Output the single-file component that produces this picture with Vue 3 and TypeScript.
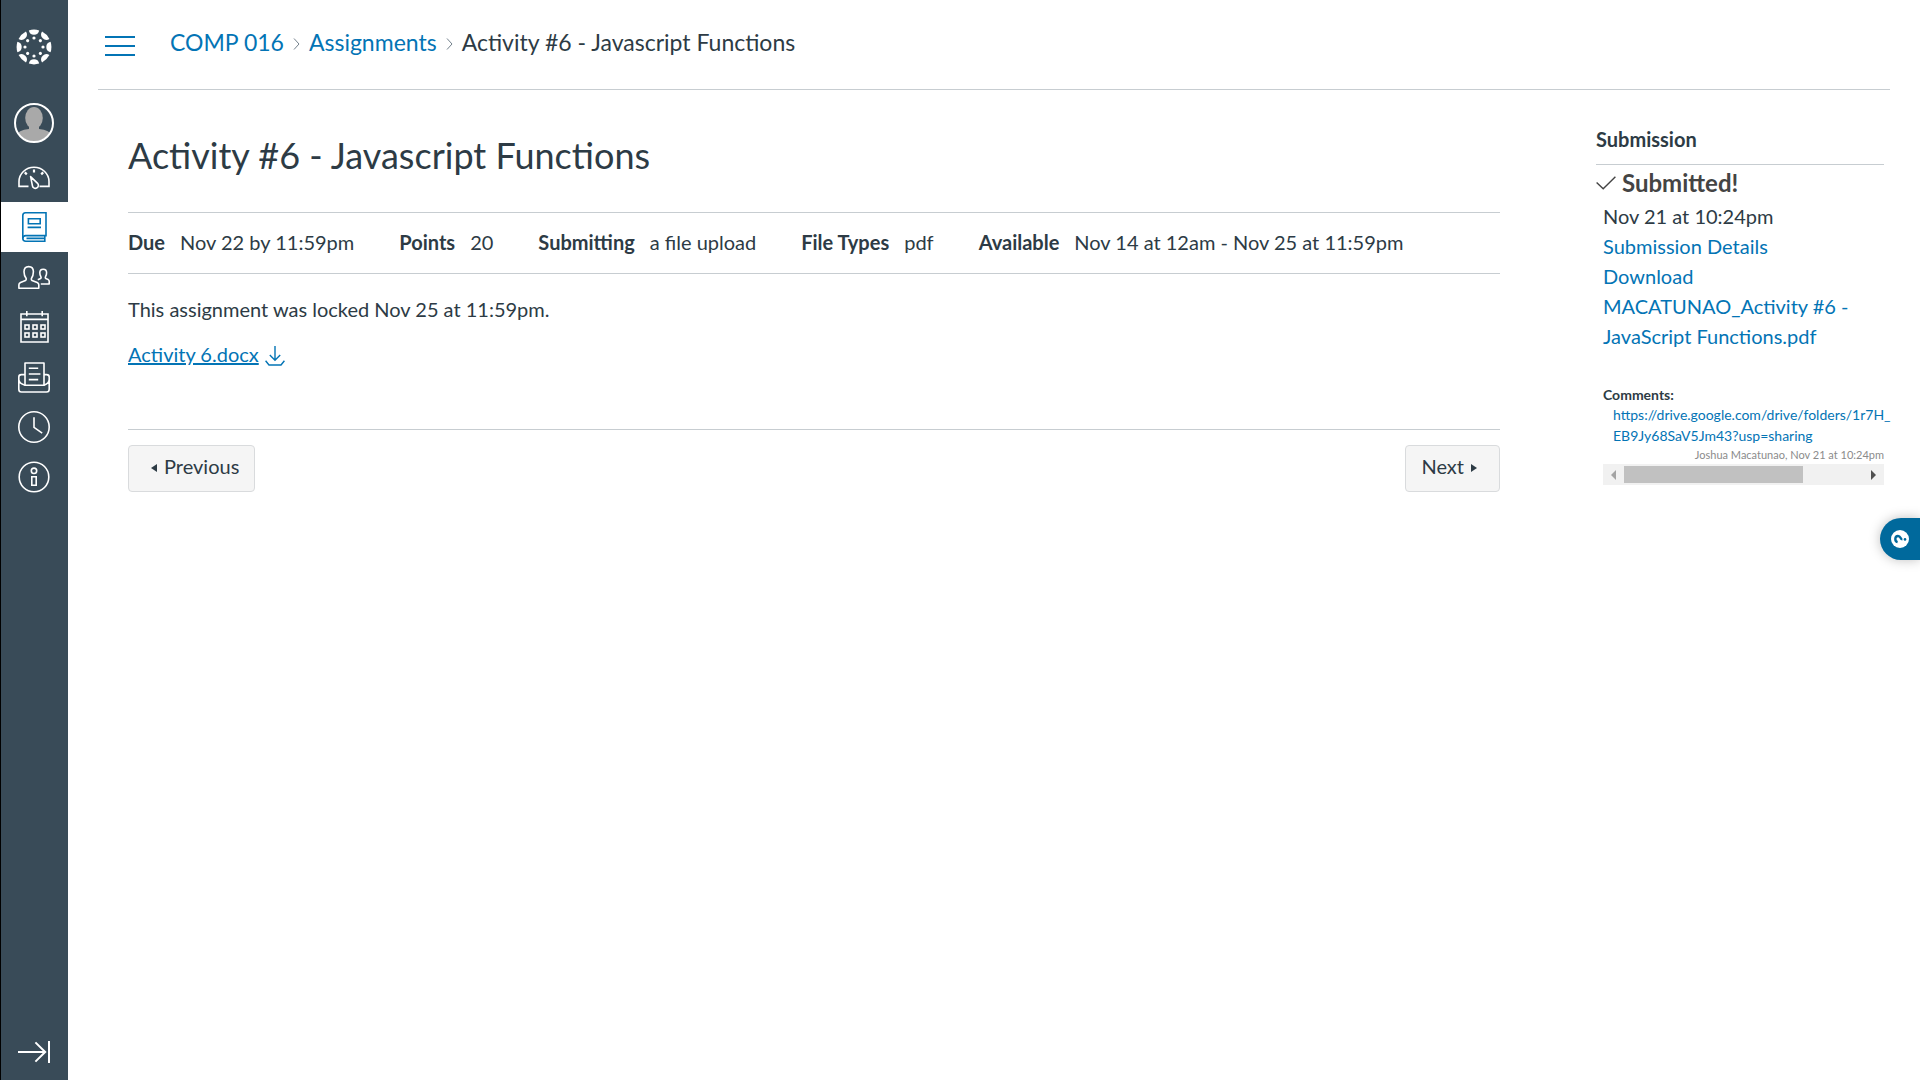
<script setup lang="ts">
interface NavItem {
  id: string
  label: string
  active?: boolean
}

interface Detail {
  label: string
  value: string
}

const navItems: NavItem[] = [
  { id: 'dashboard', label: 'Dashboard' },
  { id: 'courses', label: 'Courses', active: true },
  { id: 'groups', label: 'Groups' },
  { id: 'calendar', label: 'Calendar' },
  { id: 'inbox', label: 'Inbox' },
  { id: 'history', label: 'History' },
  { id: 'help', label: 'Help' },
]

const details: Detail[] = [
  { label: 'Due', value: 'Nov 22 by 11:59pm' },
  { label: 'Points', value: '20' },
  { label: 'Submitting', value: 'a file upload' },
  { label: 'File Types', value: 'pdf' },
  { label: 'Available', value: 'Nov 14 at 12am - Nov 25 at 11:59pm' },
]

const logoAngles: number[] = [0, 45, 90, 135, 180, 225, 270, 315]
const calendarCells: number[][] = [
  [6, 14], [14, 14], [22, 14],
  [6, 22], [14, 22], [22, 22],
]
</script>

<template>
  <div class="app">
    <nav class="global-nav" aria-label="Global navigation">
      <a class="logo" href="#" aria-label="Home">
        <svg viewBox="-18 -18 36 36" width="36" height="36" fill="#fff">
          <g v-for="a in logoAngles" :key="a" :transform="`rotate(${a})`">
            <path d="M-5.2 -16.6A17.4 17.4 0 0 1 5.2 -16.6A5.3 5.3 0 0 1 -5.2 -16.6Z" />
            <circle cx="0" cy="-9" r="1.6" />
          </g>
        </svg>
      </a>
      <a class="account" href="#" aria-label="Account">
        <svg viewBox="0 0 40 40" width="40" height="40">
          <defs>
            <clipPath id="avatar-clip"><circle cx="20" cy="20" r="18.5" /></clipPath>
          </defs>
          <g clip-path="url(#avatar-clip)" fill="#a9a9a9">
            <ellipse cx="20" cy="15" rx="8.8" ry="11" />
            <path d="M15 23H25V26Q36 27 38 33V40H2V33Q4 27 15 26Z" />
          </g>
          <circle cx="20" cy="20" r="19" fill="none" stroke="#fff" stroke-width="2" />
        </svg>
      </a>
      <a
        v-for="item in navItems"
        :key="item.id"
        href="#"
        class="nav-item"
        :class="{ active: item.active }"
        :aria-label="item.label"
      >
        <svg
          viewBox="0 0 32 32"
          width="32"
          height="32"
          fill="none"
          stroke="currentColor"
          stroke-width="1.6"
        >
          <g v-if="item.id === 'dashboard'">
            <path d="M10.5 25.4H1V20.5A15 14.2 0 0 1 31 20.5V25.4H21.5" />
            <path d="M12.6 15.6L19.6 22.3A3 3 0 1 1 14.4 24.6Z" stroke-linejoin="round" />
            <path d="M16 8.6V11.4M6.8 11.4L8.8 13.4M25.2 11.4L23.2 13.4" stroke-width="2.2" />
          </g>
          <g v-else-if="item.id === 'courses'">
            <path d="M28 1.8H7.5Q4.8 1.8 4.8 4.5V27.2Q4.8 30.2 7.8 30.2H26.5" />
            <path d="M28 1V24.6H7.8Q4.8 24.6 4.8 27.4M26.8 24.6V31M8.5 27.4H26" />
            <path d="M10.4 7.8H22.2V12.8H10.4ZM9.6 16.4H23" />
          </g>
          <g v-else-if="item.id === 'groups'" stroke-linejoin="round">
            <path d="M.9 27.2V23.8Q.9 22.2 2.5 21.5L7.5 19.6Q8.5 19 8.2 17.5Q6 14.5 6 10.8Q6 5.6 10.7 5.6Q15.4 5.6 15.4 10.8Q15.4 14.5 13.4 17.5Q13 19 14 19.6L19.2 21.5Q20.8 22.2 20.8 23.8V27.2Z" />
            <path d="M19.8 18.8L22.6 17.6Q23.6 17 22.8 15.5Q21.8 14 21.8 11.8Q21.8 8.2 25.2 8.2Q28.6 8.2 28.6 11.8Q28.6 14 27.6 15.5Q26.8 17 27.8 17.6L30.2 18.6Q31.2 19.2 31.2 20.2V23H22.8" />
          </g>
          <g v-else-if="item.id === 'calendar'">
            <path d="M3 3H30V31H3ZM3 8.4H30M8.8 0V5.2M24.2 0V5.2" />
            <rect
              v-for="(cell, i) in calendarCells"
              :key="i"
              :x="cell[0] + 1"
              :y="cell[1]"
              width="4"
              height="4"
            />
          </g>
          <g v-else-if="item.id === 'inbox'" stroke-linejoin="round">
            <path d="M7 24.2V2H26V24.2Z" />
            <path d="M7 13.6H3.4Q.8 13.6 .8 16V28.2Q.8 31 3.4 31H28.6Q31.2 31 31.2 28.2V16Q31.2 13.6 28.6 13.6H26M.8 18.5Q1 22.5 7 24.2M31.2 18.5Q31 22.5 26 24.2" />
            <path d="M10.8 7.2H20.2M10.8 13H22.4M10.8 18.6H20.2" />
          </g>
          <g v-else-if="item.id === 'history'">
            <circle cx="16" cy="16" r="15.2" />
            <path d="M16 6.2V16.4L24.2 22.2" />
          </g>
          <g v-else>
            <circle cx="16" cy="16" r="14.8" />
            <circle cx="16" cy="9.8" r="2.7" />
            <path d="M13.8 15.8H18.2V24.2H13.8Z" />
          </g>
        </svg>
      </a>
      <button class="nav-toggle" type="button" aria-label="Expand global navigation">
        <svg viewBox="0 0 32 32" width="32" height="32" fill="none" stroke="#fff" stroke-width="2">
          <path d="M0 16H27.4M17.4 6.4L27.2 16L17.4 25.6M31 5V27" />
        </svg>
      </button>
    </nav>

    <div class="page">
      <header class="top-bar">
        <button class="menu-toggle" type="button" aria-label="Course navigation menu">
          <span></span><span></span><span></span>
        </button>
        <nav class="crumbs" aria-label="Breadcrumbs">
          <a href="#">COMP 016</a>
          <svg viewBox="0 0 7 12" width="7" height="12"><path d="M1 .5L6 6L1 11.5" /></svg>
          <a href="#">Assignments</a>
          <svg viewBox="0 0 7 12" width="7" height="12"><path d="M1 .5L6 6L1 11.5" /></svg>
          <span>Activity #6 - Javascript Functions</span>
        </nav>
      </header>

      <div class="columns">
        <main class="content">
          <h1>Activity #6 - Javascript Functions</h1>
          <dl class="details">
            <div v-for="d in details" :key="d.label">
              <dt>{{ d.label }}</dt>
              <dd>{{ d.value }}</dd>
            </div>
          </dl>
          <p>This assignment was locked Nov 25 at 11:59pm.</p>
          <p class="file">
            <a href="#">Activity 6.docx</a>
            <a href="#" class="download" aria-label="Download Activity 6.docx">
              <svg viewBox="0 0 20 20" width="20" height="20" fill="none" stroke="currentColor" stroke-width="1.4">
                <path d="M10 0V14M4.8 9L10 14.2L15.2 9M.6 14.8L4 19H16L19.4 14.8" />
              </svg>
            </a>
          </p>
          <div class="pager">
            <button type="button" class="prev">
              <svg viewBox="0 0 6 8" width="6" height="8"><path d="M6 0V8L0 4Z" /></svg>
              Previous
            </button>
            <button type="button">
              Next
              <svg viewBox="0 0 6 8" width="6" height="8"><path d="M0 0V8L6 4Z" /></svg>
            </button>
          </div>
        </main>

        <aside class="sidebar">
          <h2>Submission</h2>
          <h3>
            <svg viewBox="0 0 20 14" width="20" height="14" fill="none" stroke="currentColor" stroke-width="1.4">
              <path d="M.6 6.4L7.2 12.8L19.4 .8" />
            </svg>
            Submitted!
          </h3>
          <div class="submission">
            <div>Nov 21 at 10:24pm</div>
            <a href="#">Submission Details</a>
            <a href="#">Download MACATUNAO_Activity #6 - JavaScript Functions.pdf</a>
          </div>
          <section class="comments">
            <h4>Comments:</h4>
            <a href="#">https://drive.google.com/drive/folders/1r7H_<br />EB9Jy68SaV5Jm43?usp=sharing</a>
            <div class="author">Joshua Macatunao, Nov 21 at 10:24pm</div>
            <div class="scrollbar" aria-hidden="true">
              <svg viewBox="0 0 5 10" width="5" height="10" fill="#a3a3a3"><path d="M5 0V10L0 5Z" /></svg>
              <div class="track"><div class="thumb"></div></div>
              <svg viewBox="0 0 5 10" width="5" height="10" fill="#505050"><path d="M0 0V10L5 5Z" /></svg>
            </div>
          </section>
        </aside>
      </div>
    </div>

    <button class="help-tab" type="button" aria-label="Support">
      <svg viewBox="0 0 18 18" width="18" height="18">
        <circle cx="9" cy="9" r="9" fill="#fff" />
        <path d="M6.6 12.2C3.4 11.4 3.6 6 7 6C10 6 9 9.4 11.4 9.4" fill="none" stroke="#00699c" stroke-width="2.4" />
        <circle cx="14" cy="9.4" r="1.3" fill="#00699c" />
      </svg>
    </button>
  </div>
</template>

<style>
body {
  margin: 0;
  background: #fff;
}
</style>

<style scoped>
.app {
  display: flex;
  min-height: 100vh;
  font-family: Lato, "Open Sans", sans-serif;
  font-size: 20px;
  line-height: 30px;
  color: #2d3b45;
}

a {
  color: #0374b5;
  text-decoration: none;
}

button {
  font: inherit;
  color: inherit;
  cursor: pointer;
}

svg {
  display: block;
  flex: none;
}

h1, h2, h3, h4, p, dl, dd {
  margin: 0;
}

.global-nav {
  box-sizing: border-box;
  flex: none;
  display: flex;
  flex-direction: column;
  width: 68px;
  background: #394b58;
  border-left: 1px solid #000;
}

.logo,
.account,
.nav-item,
.nav-toggle {
  display: flex;
  align-items: center;
  justify-content: center;
  padding: 0 1px 0 0;
}

.logo {
  height: 94px;
}

.account {
  height: 58px;
}

.nav-item {
  height: 50px;
  color: #fff;
}

.nav-item.active {
  background: #fff;
  color: #0374b5;
}

.nav-toggle {
  height: 56px;
  margin-top: auto;
  border: 0;
  background: none;
}

.page {
  flex: 1;
  min-width: 0;
  padding: 0 30px;
}

.top-bar {
  display: flex;
  align-items: center;
  gap: 35px;
  height: 89px;
  padding-left: 7px;
  border-bottom: 1px solid #c7cdd1;
}

.menu-toggle {
  display: flex;
  flex-direction: column;
  gap: 7px;
  width: 30px;
  padding: 2px 0 0;
  border: 0;
  background: none;
}

.menu-toggle span {
  height: 2px;
  background: #0374b5;
}

.crumbs {
  display: flex;
  align-items: center;
  gap: 9px;
  padding-bottom: 5px;
  font-size: 23px;
}

.crumbs svg {
  padding-top: 3px;
  fill: none;
  stroke: #73818c;
}

.columns {
  display: flex;
  justify-content: space-between;
  padding: 0 6px 0 30px;
}

.content {
  flex: 1;
  min-width: 0;
  padding-top: 40px;
}

h1 {
  font-size: 36px;
  line-height: 50px;
  font-weight: 400;
}

.details {
  display: flex;
  flex-wrap: wrap;
  column-gap: 45px;
  margin: 32px 0 20px;
  padding: 14px 0 16px;
  border: solid #c7cdd1;
  border-width: 1px 0;
}

.details div {
  display: flex;
  gap: 15px;
}

dt {
  font-weight: 700;
}

.file {
  display: flex;
  align-items: center;
  gap: 6px;
  margin-top: 15px;
}

.file a {
  text-decoration: underline;
}

.download {
  padding-top: 4px;
}

.pager {
  display: flex;
  justify-content: space-between;
  margin-top: 60px;
  padding-top: 15px;
  border-top: 1px solid #c7cdd1;
}

.pager button {
  display: flex;
  align-items: center;
  gap: 7px;
  height: 47px;
  padding: 0 22px 6px 15px;
  border: 1px solid #d9dbdd;
  border-radius: 4px;
  background: #f5f5f5;
}

.pager .prev {
  padding: 0 15px 6px 22px;
}

.pager svg {
  padding-top: 4px;
  fill: #2d3b45;
}

.sidebar {
  flex: none;
  width: 288px;
  margin-left: 96px;
  padding-top: 34px;
}

h2 {
  padding-bottom: 10px;
  border-bottom: 1px solid #c7cdd1;
  font-size: 20px;
  line-height: 30px;
}

h3 {
  display: flex;
  align-items: center;
  gap: 6px;
  padding: 3px 0;
  font-size: 24px;
  line-height: 30px;
  color: #444;
}

.submission {
  display: flex;
  flex-direction: column;
  margin-left: 7px;
}

.comments {
  margin: 34px 0 0 7px;
  font-size: 14px;
  line-height: 21px;
}

h4 {
  font-size: 14px;
  line-height: 19px;
}

.comments a {
  display: block;
  margin-left: 10px;
  white-space: nowrap;
}

.author {
  font-size: 11px;
  line-height: 18px;
  text-align: right;
  color: #8b8b8b;
}

.scrollbar {
  display: flex;
  align-items: center;
  gap: 8px;
  height: 21px;
  padding: 0 8px;
  background: #f1f1f1;
}

.track {
  flex: 1;
}

.thumb {
  width: 75%;
  height: 17px;
  background: #c1c1c1;
}

.help-tab {
  position: fixed;
  top: 518px;
  right: 0;
  width: 40px;
  height: 42px;
  padding: 0 0 0 11px;
  border: 0;
  border-radius: 21px 0 0 21px;
  background: #00699c;
  box-shadow: 0 0 12px rgba(0, 0, 0, 0.25);
}
</style>
